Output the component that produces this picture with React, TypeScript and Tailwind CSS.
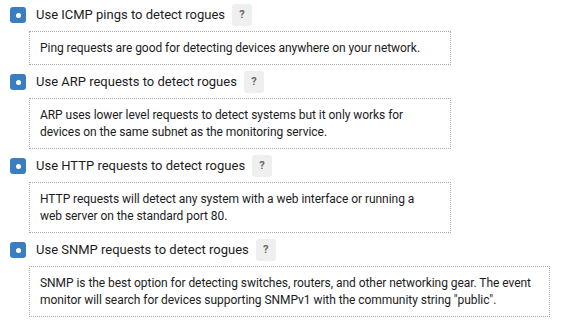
import React from 'react';

const items = [
  {
    title: 'Use ICMP pings to detect rogues',
    text: 'Ping requests are good for detecting devices anywhere on your network.',
    wide: false,
  },
  {
    title: 'Use ARP requests to detect rogues',
    text: 'ARP uses lower level requests to detect systems but it only works for devices on the same subnet as the monitoring service.',
    wide: false,
  },
  {
    title: 'Use HTTP requests to detect rogues',
    text: 'HTTP requests will detect any system with a web interface or running a web server on the standard port 80.',
    wide: false,
  },
  {
    title: 'Use SNMP requests to detect rogues',
    text: 'SNMP is the best option for detecting switches, routers, and other networking gear. The event monitor will search for devices supporting SNMPv1 with the community string "public".',
    wide: true,
  },
];

const App: React.FC = () => {
  return (
    <div className="w-[566px] h-[324px] bg-white overflow-hidden pl-[10px] pt-[4px] font-['Roboto',Arial,sans-serif] text-[#1c1c1c]">
      {items.map((it) => (
        <div key={it.title} className="mb-[6px]">
          {/* heading row */}
          <div className="flex items-center h-[22px]">
            <span className="w-[16px] h-[16px] rounded-[3px] bg-[#3a7ec1] flex items-center justify-center">
              <span className="w-[5px] h-[5px] rounded-full bg-white" />
            </span>
            <span className="ml-[10px] text-[13px]">{it.title}</span>
            <span className="ml-[7px] w-[20px] h-[22px] rounded-[3px] bg-[#efefef] flex items-center justify-center text-[11px] font-bold text-[#666]">
              ?
            </span>
          </div>
          {/* description */}
          <div
            className={
              'ml-[19px] mt-[5px] border border-dotted border-[#aaa] pl-[10px] pr-[12px] pt-[8px] pb-[7px] text-[12px] tracking-[-0.05px] leading-[17px] ' +
              (it.wide ? 'w-[521px]' : 'w-[422px]')
            }
          >
            {it.text}
          </div>
        </div>
      ))}
    </div>
  );
};

export default App;
